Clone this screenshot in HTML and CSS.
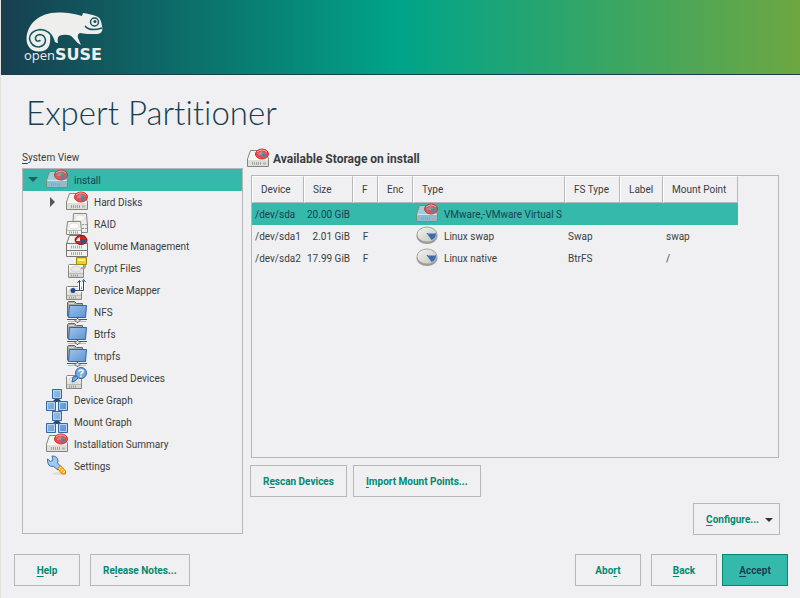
FILE: index.html
```html
<!DOCTYPE html>
<html lang="en">
<head>
<meta charset="utf-8">
<meta name="viewport" content="width=device-width, initial-scale=1">
<title>Expert Partitioner</title>
<link rel="stylesheet" href="styles.css">
</head>
<body>
<svg class="sprite" aria-hidden="true">
  <defs>
    <linearGradient id="blue" x1="0" y1="0" x2="1" y2="1"><stop offset="0" stop-color="#9fc4ec"/><stop offset="1" stop-color="#5d93cf"/></linearGradient>
    <linearGradient id="metal" x1="0" y1="0" x2="0" y2="1"><stop offset="0" stop-color="#fff"/><stop offset="1" stop-color="#cfcfcb"/></linearGradient>
    <linearGradient id="disc" x1="0" y1="0" x2="1" y2="1"><stop offset="0" stop-color="#f5f5f2"/><stop offset="1" stop-color="#c2c2be"/></linearGradient>
  </defs>
  <symbol id="base" viewBox="0 0 22 22">
    <path class="metal-top" d="M3.5 2.5H18.5L21.5 11V18.5H.5V11Z"/>
    <path class="metal-front" d="M1 12H21V18H1Z"/><path d="M1.5 11.5H20.5" stroke="#fff" opacity=".7"/>
    <path d="M5 15.500H15" stroke="#a5a5a0" stroke-width="3" stroke-dasharray="1 1"/><path d="M16 15.500H19" stroke="#b5b5b0" stroke-width="2"/>
  </symbol>
  <symbol id="pie" viewBox="0 0 16 12">
    <ellipse cx="8" cy="6" rx="6.5" ry="5" fill="#f04c4c" stroke="#d03030"/>
    <path d="M3 4Q8 0 13 4" stroke="#faa" fill="none"/>
    <path d="M8 3V7H4Q4 4 8 3Z" fill="#b58a9c"/><path d="M8 3L12 6L8 7Z" fill="#58a65c"/><path d="M8 6L12 6Q12 9 9 10Z" fill="#4d7fc0"/>
  </symbol>
  <symbol id="disk" viewBox="0 0 22 22">
    <use href="#base" width="22" height="22"/><use href="#pie" x="7" y="0" width="16" height="12"/>
  </symbol>
  <symbol id="smalldisk" viewBox="0 0 16 14">
    <path d="M.5 1.5Q.5.5 1.5.5H14.5Q15.5.5 15.5 1.5V13.5H.5Z" fill="url(#metal)" stroke="#88887f"/>
    <ellipse cx="8" cy="5" rx="5" ry="3" fill="#e8e8e4" stroke="#d2d2ce"/><path d="M1 9.5H15" stroke="#bbb"/><path d="M3 11.5H10" stroke="#999" stroke-width="2" stroke-dasharray="1 1"/>
  </symbol>
  <symbol id="raid" viewBox="0 0 22 22">
    <path d="M7.5.5H20.5L21.5 13V19.5H6.5Z" fill="#ededeb" stroke="#88887f"/><ellipse cx="14" cy="5" rx="5" ry="3" fill="#f9f9f8" stroke="#ddd"/><path d="M16 11.5H21M16 15.5H21" stroke="#999" stroke-dasharray="2 1"/>
    <path d="M1.5 8.5H14.5L15.5 18V21.5H.5V18Z" fill="#f4f4f2" stroke="#88887f"/><ellipse cx="8" cy="13" rx="5" ry="3" fill="#fff" stroke="#ddd"/><path d="M1 17.5H15" stroke="#bbb"/><path d="M3 19.5H12" stroke="#999" stroke-width="2" stroke-dasharray="1 1"/>
  </symbol>
  <symbol id="volume" viewBox="0 0 22 22">
    <path d="M3.5.5H18.5L21.5 9V21.5H.5V9Z" fill="#f1f1ef" stroke="#77776f"/><path d="M.5 8.500H21.5M.5 15.5H21.5" stroke="#77776f"/><path d="M5 12H16M5 18.500H16" stroke="#aaa" stroke-width="3" stroke-dasharray="1 1"/>
    <ellipse cx="15" cy="5" rx="6" ry="4.5" fill="#d92020" stroke="#8b1515"/><path d="M14 2V6H10Q11 3 14 2Z" fill="#eee"/><path d="M14 4L20 4Q20 8 15 9Z" fill="#25579b"/>
  </symbol>
  <symbol id="crypt" viewBox="0 0 22 22">
    <use href="#smalldisk" x="2" y="7" width="16" height="14"/><path d="M12 8V6H19V10Q18 12 15 11" fill="none" stroke="#a3a39b" stroke-width="2"/><path d="M10.5.5H20.500V7.500H10.500Z" fill="#e8d225" stroke="#a38b06"/><path d="M12 3H19" stroke="#fff3a2" stroke-width="2"/>
  </symbol>
  <symbol id="mapper" viewBox="0 0 22 22">
    <use href="#smalldisk" x="0" y="7" width="16" height="14"/><path d="M7 11.5H17.500V2M13.500 11V2" fill="none" stroke="#fff" stroke-width="3"/><path d="M7 11.500H17.500V2M13.500 11V2" fill="none" stroke="#204a87"/><path d="M11.500 4L13.500 1.500L14.500 3M16.500 2.500L17.500.500L19.500 3" fill="none" stroke="#204a87"/><circle cx="7" cy="11.500" r="2.500" fill="#204a87"/>
  </symbol>
  <symbol id="folder" viewBox="0 0 22 22">
    <path d="M1.500 15.500V1.500L2.500.500H8.500L10.500 2.500H16.500V5" fill="#aaa" stroke="#66665f"/><path d="M3 2.500H8" stroke="#ddd"/>
    <path d="M3.500 4.500H20.500L19.500 16.500H2.500Z" fill="url(#blue)" stroke="#2f66a5"/><path d="M1 18.500H21" stroke="#555753"/><path d="M2 20.500H20" stroke="#bbb"/><path d="M9 19.500L11 17.500H12L14 19.500L12 21.500H11Z" fill="#ddd" stroke="#555753"/>
  </symbol>
  <symbol id="unused" viewBox="0 0 22 22">
    <use href="#smalldisk" x="0" y="8" width="16" height="14"/><path d="M6 15L7 10L11 9L12 11L9 14Z" fill="#77a8dc" stroke="#2f66a5"/><circle cx="15" cy="6" r="5.500" fill="#78a9df" stroke="#2f66a5"/><path d="M13 4.500Q13 3 15 3Q17 3 17 4.500Q17 5.500 15 6.500V7.500M15 8.500V10" fill="none" stroke="#fff" stroke-width="1.500"/>
  </symbol>
  <symbol id="graph" viewBox="0 0 22 22">
    <path d="M10 9H12L16 13H6Z" fill="#204a87"/>
    <g fill="#6d9fd6" stroke="#3465a4"><path d="M6.500.500H15.500V9.500H6.500ZM.500 12.500H9.500V21.500H.500ZM12.500 12.500H21.500V21.500H12.500Z"/></g><path d="M7.500 8.500V1.500H14.500V8.500ZM1.500 20.500V13.500H8.500V20.500ZM13.500 20.500V13.500H20.500V20.500Z" fill="url(#blue)" stroke="#b9d5f1"/>
  </symbol>
  <symbol id="tools" viewBox="0 0 22 22">
    <ellipse cx="13" cy="18.500" rx="7" ry="1.500" fill="#ddd"/><path d="M1.500 4L4.500 6.500L7 5L6 1Q12 1 12 6L11.500 8L15.500 12L12 15L7.500 11.500Q1 12 1.500 4Z" fill="#a5c7ed" stroke="#3971b3"/><path d="M11.500 13.500L14.500 10.500L19.500 16V19H16Z" fill="#fbb32f" stroke="#e07f05"/><path d="M13 14L15 12M15 16L17 14M17 18L19 16" stroke="#fff2b3"/>
  </symbol>
  <symbol id="partition" viewBox="0 0 22 22">
    <ellipse cx="11" cy="11.500" rx="10.500" ry="7.500" fill="#9a9a95"/><ellipse cx="11" cy="9.500" rx="10" ry="7.500" fill="url(#disc)" stroke="#a5a5a0"/><path d="M10.500 8H20Q20.500 13 15.500 15Z" fill="#3a6cae"/><path d="M12 8.500H19.500" stroke="#7fa7da"/>
  </symbol>
</svg>

<header class="banner">
  <div class="logo">
    <svg class="chameleon" viewBox="0 0 80 40" role="img" aria-label="openSUSE chameleon">
      <path d="M15 39.500C6 39.500 2.500 33 2.500 27C3 12 15 .5 34 .5C44 .5 51 2 58 4L59 1C63 1.500 70 3 74 5C77 7 77.500 11 78 14C79 18 78 22 73 22C66 22 60 22 56 21Q53 22 54 26L57 33Q53 31 50 27Q47 23 44 23Q39 22 35 24Q33 26 34 31Q30 31 29 26L26 23Q28 39.500 15 39.500Z" fill="#eeeeec"/>
      <path class="cut" d="M30 29Q26 17.500 16 17.500Q5.500 19 5.500 27Q7.500 35 15 35Q21.500 33.500 21.500 28Q20.500 22.500 15.500 22.500Q11 23.500 11.500 27Q12.500 30.500 16 28.500" fill="none" stroke-width="1.500" stroke-linecap="round"/>
      <path class="cut" d="M61 14Q66 20 78 16" fill="none" stroke-width="1.500"/><circle class="cut" cx="70.500" cy="10" r="4" fill="none" stroke-width="1.500"/><circle cx="71" cy="9.500" r="1.500" fill="#14555b"/>
    </svg>
    <div class="wordmark"><span>open</span><b>SUSE</b></div>
  </div>
</header>

<h1>Expert Partitioner</h1>

<main>
  <section class="side">
    <h2 class="side-label"><u>S</u>ystem View</h2>
    <ul class="tree">
      <li><div class="node selected"><i class="arrow down"></i><svg><use href="#disk"/></svg>install</div>
        <ul>
          <li class="node"><i class="arrow right"></i><svg><use href="#disk"/></svg>Hard Disks</li>
          <li class="node"><svg><use href="#raid"/></svg>RAID</li>
          <li class="node"><svg><use href="#volume"/></svg>Volume Management</li>
          <li class="node"><svg><use href="#crypt"/></svg>Crypt Files</li>
          <li class="node"><svg><use href="#mapper"/></svg>Device Mapper</li>
          <li class="node"><svg><use href="#folder"/></svg>NFS</li>
          <li class="node"><svg><use href="#folder"/></svg>Btrfs</li>
          <li class="node"><svg><use href="#folder"/></svg>tmpfs</li>
          <li class="node"><svg><use href="#unused"/></svg>Unused Devices</li>
        </ul>
      </li>
      <li class="node"><svg><use href="#graph"/></svg>Device Graph</li>
      <li class="node"><svg><use href="#graph"/></svg>Mount Graph</li>
      <li class="node"><svg><use href="#disk"/></svg>Installation Summary</li>
      <li class="node"><svg><use href="#tools"/></svg>Settings</li>
    </ul>
  </section>

  <section class="content">
    <h2 class="title"><svg><use href="#disk"/></svg>Available Storage on install</h2>
    <div class="frame">
      <table>
        <colgroup><col class="c-device"><col class="c-size"><col class="c-f"><col class="c-enc"><col class="c-type"><col class="c-fs"><col class="c-label"><col class="c-mount"></colgroup>
        <thead><tr><th>Device</th><th>Size</th><th>F</th><th>Enc</th><th>Type</th><th>FS Type</th><th>Label</th><th>Mount Point</th></tr></thead>
        <tbody>
          <tr class="selected"><td>/dev/sda</td><td class="num">20.00 GiB</td><td></td><td></td><td class="kind-cell"><div class="kind"><svg><use href="#disk"/></svg>VMware,-VMware Virtual S</div></td><td></td><td></td><td></td></tr>
          <tr><td>/dev/sda1</td><td class="num">2.01 GiB</td><td class="flag">F</td><td></td><td class="kind-cell"><div class="kind"><svg><use href="#partition"/></svg>Linux swap</div></td><td>Swap</td><td></td><td>swap</td></tr>
          <tr><td>/dev/sda2</td><td class="num">17.99 GiB</td><td class="flag">F</td><td></td><td class="kind-cell"><div class="kind"><svg><use href="#partition"/></svg>Linux native</div></td><td>BtrFS</td><td></td><td>/</td></tr>
        </tbody>
      </table>
    </div>
    <div class="actions"><button class="fit">R<u>e</u>scan Devices</button><button class="fit"><u>I</u>mport Mount Points...</button></div>
    <button class="configure"><span><u>C</u>onfigure...</span><i class="caret"></i></button>
  </section>
</main>

<footer>
  <button><u>H</u>elp</button>
  <button class="notes">Re<u>l</u>ease Notes...</button>
  <button class="abort">Abo<u>r</u>t</button>
  <button class="back"><u>B</u>ack</button>
  <button class="primary"><u>A</u>ccept</button>
</footer>
</body>
</html>
```
FILE: styles.css
```css
* { box-sizing: border-box; }

body {
  margin: 0;
  min-height: 100vh;
  display: flex;
  flex-direction: column;
  border-left: 1px solid #e2e2de;
  background: #f0f0f2;
  color: #3a3d3e;
  font: 10px/22px Roboto, sans-serif;
}

ul { list-style: none; margin: 0; padding: 0; }
u { text-underline-offset: 2px; }
.sprite { display: block; width: 0; height: 0; position: absolute; }
.metal-top { fill: var(--metal, #f4f4f2); stroke: #85857d; }
.metal-front { fill: var(--front, #dededa); }

.banner {
  height: 75px;
  border-bottom: 1px solid #173f4f;
  background: linear-gradient(90deg, #173f4f, #00a489 50%, #6da741);
}
.logo { width: 84px; padding-top: 12px; margin-left: 23px; color: #eeeeec; }
.chameleon { display: block; width: 80px; height: 40px; }
.cut { stroke: #14555b; }
.wordmark { display: flex; align-items: baseline; margin-top: -7px; line-height: 20px; }
.wordmark span { font: 13px/20px "Open Sans", sans-serif; }
.wordmark b { font: bold 16px/20px "DejaVu Sans", sans-serif; }

h1 {
  margin: 0;
  padding: 17px 25px 15px;
  color: #173f4f;
  font: 300 33px/40px Lato, sans-serif;
  font-variant-ligatures: none;
}

main { flex: 1; display: flex; gap: 4px; padding: 0 20px 0 21px; }
.side { flex: 0 0 221px; display: flex; flex-direction: column; padding-bottom: 1px; }
.side-label { margin: 0; font-size: 10px; font-weight: 400; line-height: 21px; }
.tree { flex: 1; border: 1px solid #b6b7b9; }
.tree ul { flex: none; border: 0; }
.node, .kind { display: flex; gap: 6px; height: 22px; line-height: 24px; }
.node { padding-left: 23px; position: relative; }
.tree ul .node { padding-left: 43px; }
.node svg, .kind svg, .title svg { flex: none; width: 22px; height: 22px; }
.selected { background: #35b9ab; color: #173f4f; }
.selected svg { opacity: .85; --metal: #b4d0e4; --front: #9dbdd6; }
.arrow { position: absolute; top: 8px; left: 5px; border: 5px solid transparent; }
.down { border-top: 5px solid #235e61; border-bottom: 0; }
.right { top: 6px; left: 27px; border-left: 5px solid #555; border-right: 0; }

.content { flex: 1; min-width: 0; display: flex; flex-direction: column; }
.title { display: flex; align-items: center; gap: 4px; height: 24px; margin: 0 0 4px; font-size: 12px; font-weight: 700; line-height: 24px; }
.frame { flex: 1; margin: 0 1px 0 4px; border: 1px solid #b6b7b9; overflow: hidden; }
table { width: 486px; table-layout: fixed; border-collapse: separate; border-spacing: 0; }
.c-device { width: 52px; }
.c-size { width: 49px; }
.c-f { width: 25px; }
.c-enc { width: 35px; }
.c-type { width: 152px; }
.c-fs { width: 55px; }
.c-label { width: 43px; }
.c-mount { width: 75px; }
th {
  height: 27px;
  padding: 0 0 0 8px;
  border: 1px solid #b6b7b9;
  border-top-color: #fff;
  border-left-color: #fff;
  font-weight: 400;
  text-align: left;
  white-space: nowrap;
}
td { height: 22px; padding: 2px 3px 0; line-height: 20px; vertical-align: top; white-space: nowrap; }
.kind-cell { padding-top: 0; }
.num { text-align: right; }
.flag { text-align: center; }

button {
  min-width: 66px;
  height: 32px;
  padding: 2px 0 0;
  border: 1px solid #b6b7b9;
  border-radius: 0;
  background: #f0f0f2;
  color: #00896f;
  font: 700 10px/22px Roboto, sans-serif;
}
.actions { display: flex; gap: 6px; margin: 7px 0 6px 3px; }
.fit { padding: 2px 12px 0; }
.configure { align-self: flex-end; display: flex; align-items: center; gap: 6px; padding: 2px 6px 0 12px; }
.caret { border: 4px solid transparent; border-top-color: #333; border-bottom: 0; }

footer { display: flex; padding: 19px 12px 12px 13px; }
.notes { margin-left: 10px; padding: 2px 12px 0; }
.abort { margin-left: auto; }
.back { margin: 0 5px 0 10px; }
.primary { border-color: #00896f; background: #35b9ab; color: #173f4f; }
```
